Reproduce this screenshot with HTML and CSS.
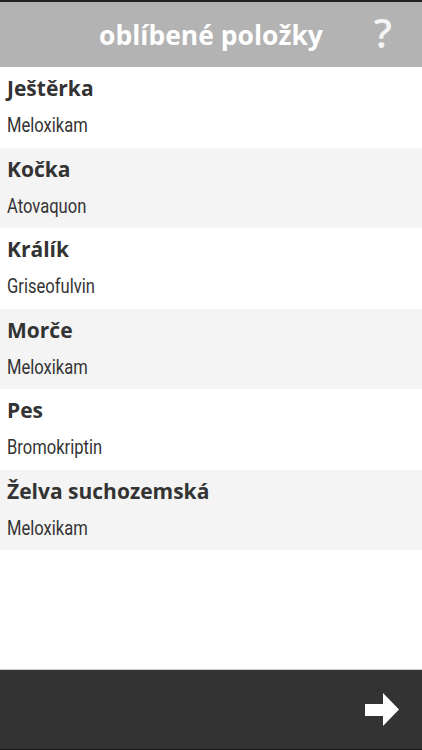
FILE: index.html
```html
<!DOCTYPE html>
<html lang="cs">
<head>
    <meta charset="UTF-8">
    <meta name="viewport" content="width=device-width, initial-scale=1.0">
    <title>oblíbené položky</title>
    <link rel="stylesheet" href="styles.css">
</head>
<body>
    <div class="app">
        <div class="header">
            <h1>oblíbené položky</h1>
            <span class="help">?</span>
        </div>

        <ul class="list">
            <li class="item">
                <div class="animal">Ještěrka</div>
                <div class="drug">Meloxikam</div>
            </li>
            <li class="item">
                <div class="animal">Kočka</div>
                <div class="drug">Atovaquon</div>
            </li>
            <li class="item">
                <div class="animal">Králík</div>
                <div class="drug">Griseofulvin</div>
            </li>
            <li class="item">
                <div class="animal">Morče</div>
                <div class="drug">Meloxikam</div>
            </li>
            <li class="item">
                <div class="animal">Pes</div>
                <div class="drug">Bromokriptin</div>
            </li>
            <li class="item">
                <div class="animal">Želva suchozemská</div>
                <div class="drug">Meloxikam</div>
            </li>
        </ul>

        <div class="footer">
            <svg class="next" width="34" height="34" viewBox="0 0 34 34">
                <polygon points="0,11 18,11 18,0 34,16.5 18,33 18,23 0,23" fill="#fff"/>
            </svg>
        </div>
    </div>
</body>
</html>
```

FILE: styles.css
```css
body {
    margin: 0;
    font-family: "Open Sans", sans-serif;
    background-color: #fff;
}

.app {
    display: flex;
    flex-direction: column;
    height: 750px;
    border-top: 2px solid #222;
    box-sizing: border-box;
}

.header {
    position: relative;
    height: 65px;
    background-color: #b3b3b3;
    display: flex;
    justify-content: center;
    align-items: center;
}

.header h1 {
    margin: 0;
    color: #fff;
    font-size: 26.5px;
    font-weight: bold;
}

.help {
    position: absolute;
    right: 30px;
    top: 3px;
    color: #f4f4f4;
    font-size: 40px;
    font-weight: 600;
}

.list {
    list-style: none;
    margin: 0;
    padding: 0;
    flex: 1;
}

.item {
    height: 80.5px;
    padding: 7px 7px 0;
    box-sizing: border-box;
}

.item:nth-child(even) {
    background-color: #f4f4f4;
}

.animal {
    font-size: 21px;
    line-height: 28px;
    font-weight: bold;
    color: #333;
}

.drug {
    display: inline-block;
    margin-top: 13px;
    font-family: "Roboto", sans-serif;
    font-size: 19.5px;
    line-height: 22px;
    color: #333;
    transform: scaleX(0.85);
    transform-origin: left;
}

.footer {
    height: 81px;
    background-color: #333;
    border-top: 1px solid #ccc;
    border-bottom: 1px solid #111;
    display: flex;
    justify-content: flex-end;
    align-items: center;
    padding-right: 23px;
    box-sizing: border-box;
}
```
